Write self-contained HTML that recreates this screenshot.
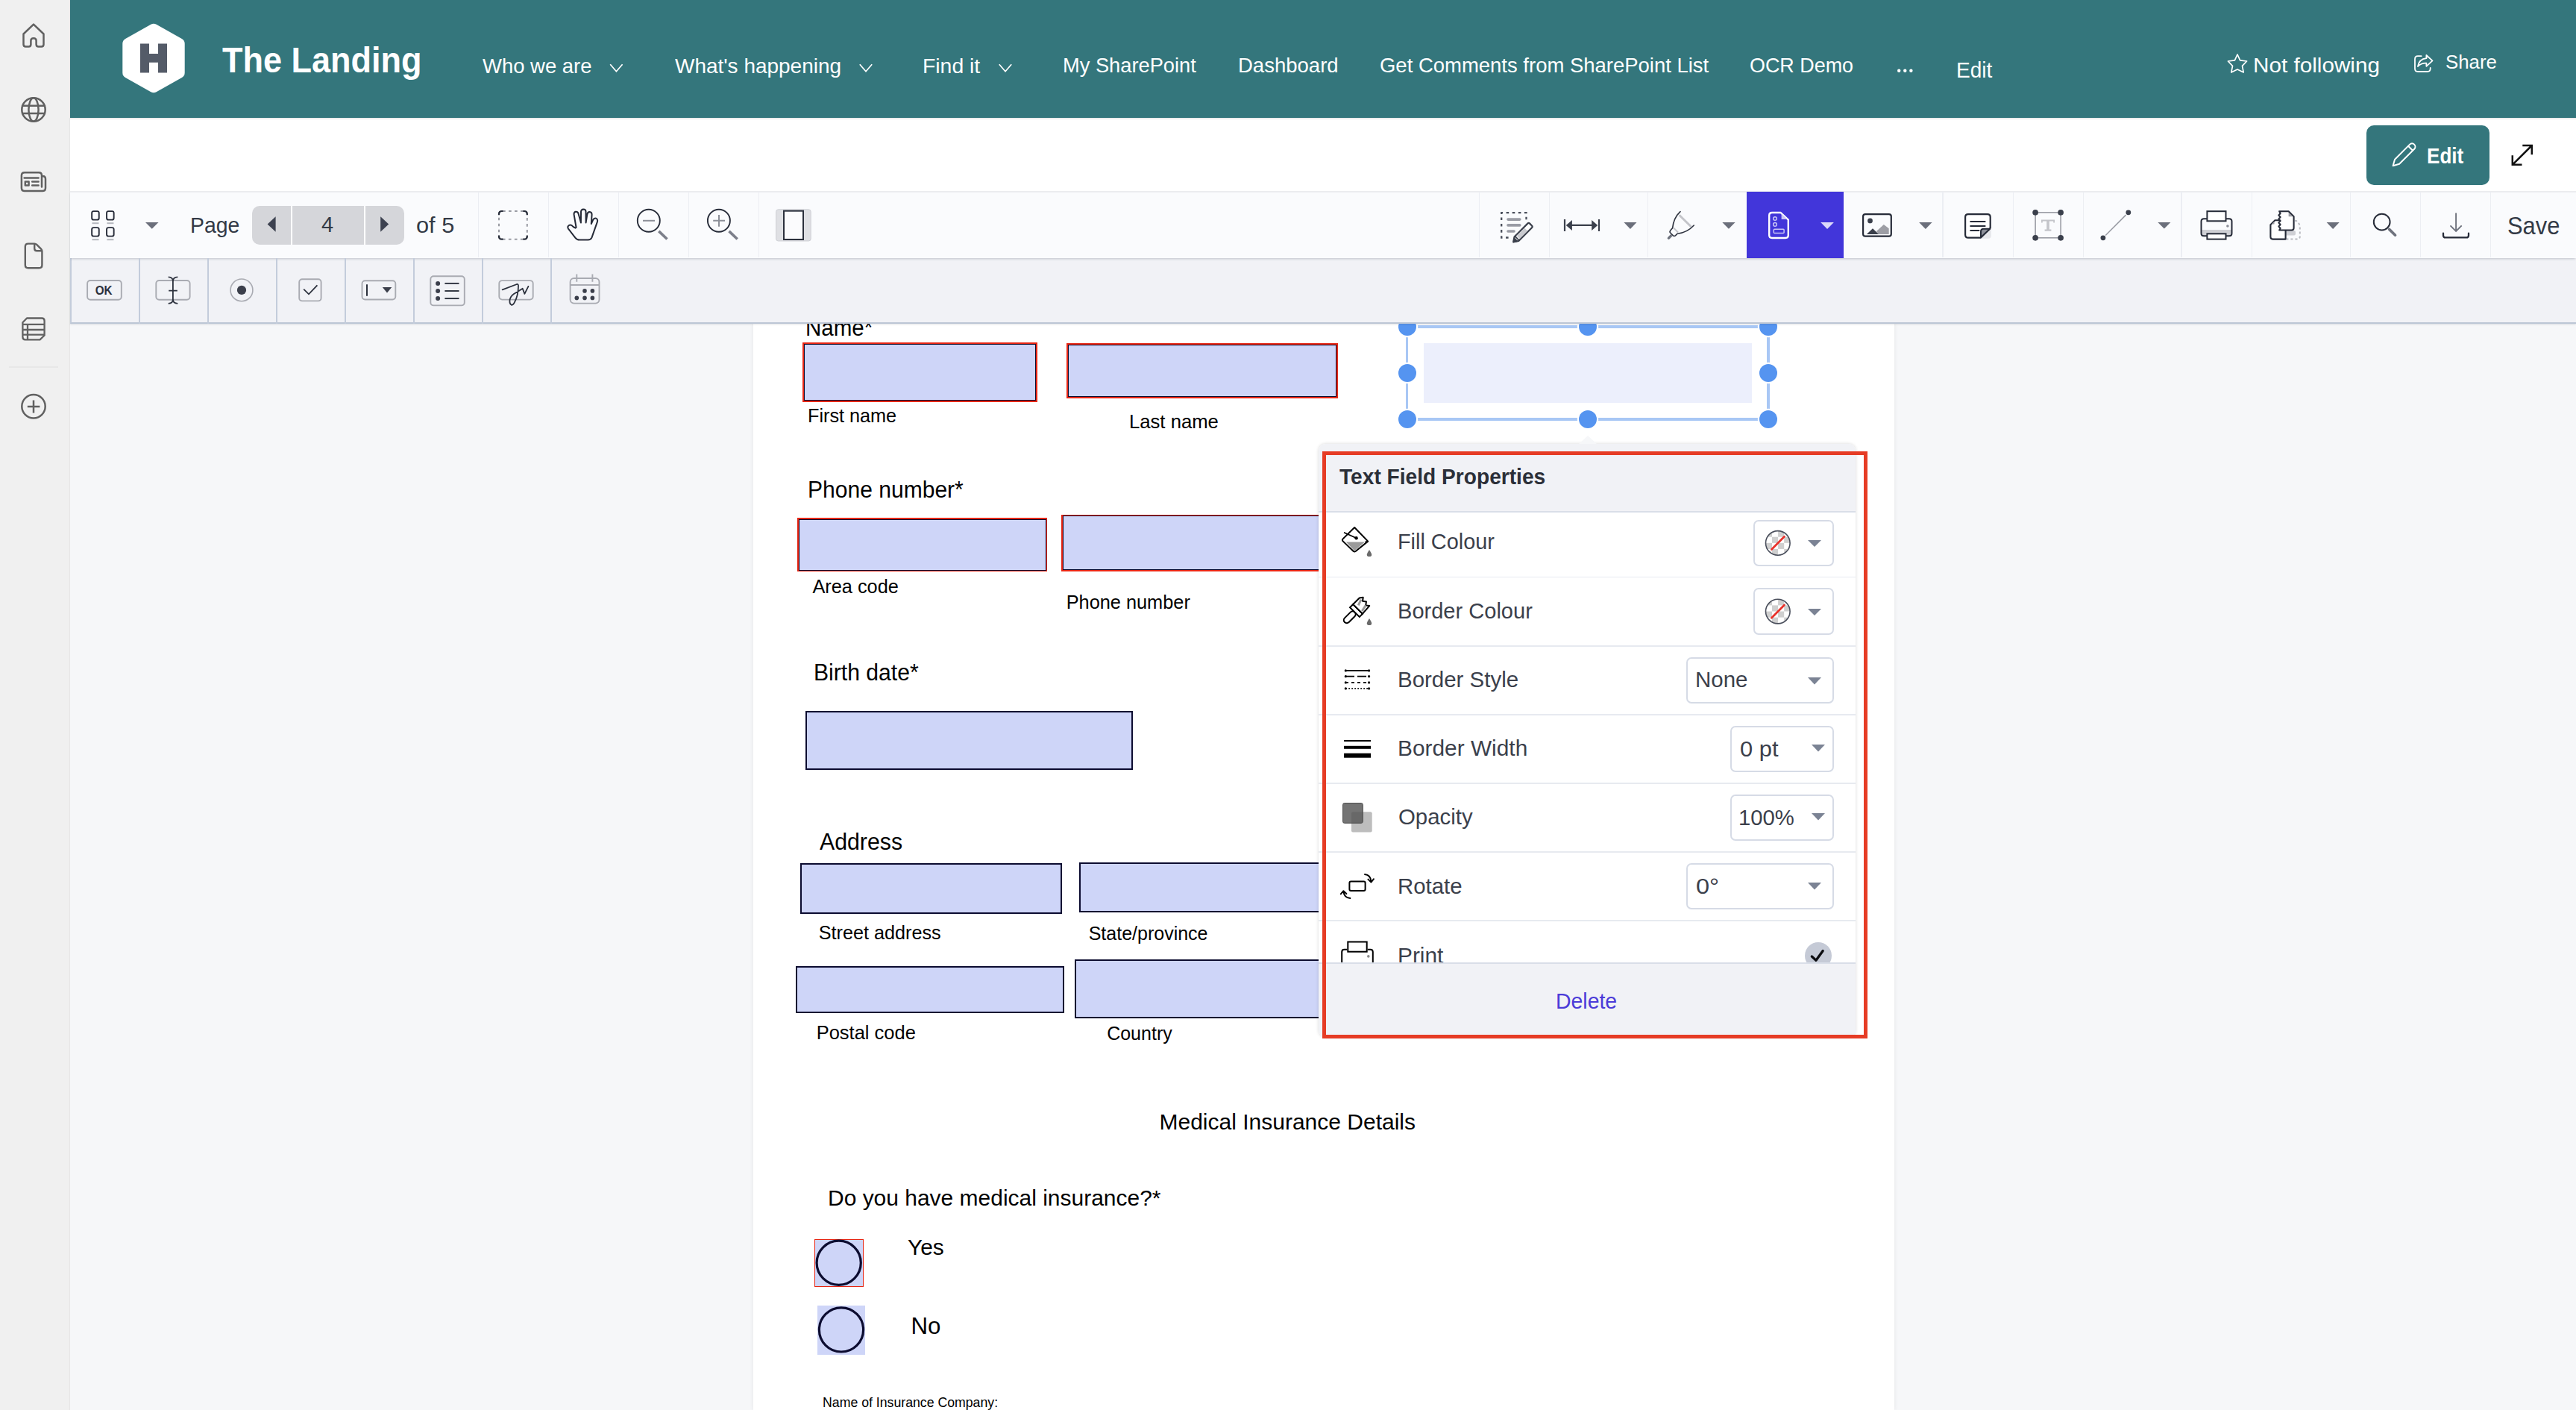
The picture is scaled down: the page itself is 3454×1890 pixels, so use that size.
<!DOCTYPE html>
<html><head><meta charset="utf-8"><style>
html,body{margin:0;padding:0}
body{width:3454px;height:1890px;overflow:hidden;position:relative;background:#f6f7f9;font-family:"Liberation Sans",sans-serif}
.t{position:absolute;white-space:nowrap;transform-origin:0 0}
svg{position:absolute;overflow:visible}
</style></head><body>
<div style="position:absolute;left:0px;top:0px;width:94px;height:1890px;background:#f0f0f0;border-right:1px solid #e6e6e6;box-sizing:border-box"></div>
<div style="position:absolute;left:94px;top:0px;width:3360px;height:158px;background:#34767c"></div>
<div style="position:absolute;left:94px;top:158px;width:3360px;height:99px;background:#ffffff;border-top:2px solid #ededed;box-sizing:border-box"></div>
<div style="position:absolute;left:94px;top:432px;width:3360px;height:1458px;background:#f6f7f9"></div>
<div style="position:absolute;left:1010px;top:432px;width:1530px;height:1458px;background:#ffffff;box-shadow:0 0 6px rgba(0,0,0,0.08);z-index:1"></div>
<div style="position:absolute;left:94px;top:256px;width:3360px;height:90px;background:#fafbfd;border-top:2px solid #ebecef;box-sizing:border-box;box-shadow:0 2px 3px -1px rgba(60,70,90,0.28);z-index:5"></div>
<div style="position:absolute;left:94px;top:346px;width:3360px;height:88px;background:#f1f2f6;border-left:2px solid #c3ccdb;border-bottom:2px solid #bcc6d5;box-sizing:border-box;z-index:4;box-shadow:0 1px 2px rgba(60,70,90,0.15)"></div>
<div style="position:absolute;left:186px;top:346px;width:2px;height:88px;background:#c3ccdb;z-index:6"></div>
<div style="position:absolute;left:278px;top:346px;width:2px;height:88px;background:#c3ccdb;z-index:6"></div>
<div style="position:absolute;left:370px;top:346px;width:2px;height:88px;background:#c3ccdb;z-index:6"></div>
<div style="position:absolute;left:462px;top:346px;width:2px;height:88px;background:#c3ccdb;z-index:6"></div>
<div style="position:absolute;left:554px;top:346px;width:2px;height:88px;background:#c3ccdb;z-index:6"></div>
<div style="position:absolute;left:646px;top:346px;width:2px;height:88px;background:#c3ccdb;z-index:6"></div>
<div style="position:absolute;left:738px;top:346px;width:2px;height:88px;background:#c3ccdb;z-index:6"></div>
<div style="position:absolute;left:640.5px;top:257px;width:1.5px;height:88px;background:#eceef3;z-index:6"></div>
<div style="position:absolute;left:734.5px;top:257px;width:1.5px;height:88px;background:#eceef3;z-index:6"></div>
<div style="position:absolute;left:828.5px;top:257px;width:1.5px;height:88px;background:#eceef3;z-index:6"></div>
<div style="position:absolute;left:922.5px;top:257px;width:1.5px;height:88px;background:#eceef3;z-index:6"></div>
<div style="position:absolute;left:1016.5px;top:257px;width:1.5px;height:88px;background:#eceef3;z-index:6"></div>
<div style="position:absolute;left:1982.5px;top:257px;width:1.5px;height:88px;background:#eceef3;z-index:6"></div>
<div style="position:absolute;left:2076.5px;top:257px;width:1.5px;height:88px;background:#eceef3;z-index:6"></div>
<div style="position:absolute;left:2208.5px;top:257px;width:1.5px;height:88px;background:#eceef3;z-index:6"></div>
<div style="position:absolute;left:2604.0px;top:257px;width:1.5px;height:88px;background:#eceef3;z-index:6"></div>
<div style="position:absolute;left:2698.5px;top:257px;width:1.5px;height:88px;background:#eceef3;z-index:6"></div>
<div style="position:absolute;left:2792.5px;top:257px;width:1.5px;height:88px;background:#eceef3;z-index:6"></div>
<div style="position:absolute;left:2924.1px;top:257px;width:1.5px;height:88px;background:#eceef3;z-index:6"></div>
<div style="position:absolute;left:3018.5px;top:257px;width:1.5px;height:88px;background:#eceef3;z-index:6"></div>
<div style="position:absolute;left:3150.5px;top:257px;width:1.5px;height:88px;background:#eceef3;z-index:6"></div>
<div style="position:absolute;left:3244.5px;top:257px;width:1.5px;height:88px;background:#eceef3;z-index:6"></div>
<div style="position:absolute;left:3338.5px;top:257px;width:1.5px;height:88px;background:#eceef3;z-index:6"></div>
<div style="position:absolute;left:2342px;top:257px;width:130px;height:88.5px;background:#4236da;z-index:7"></div>
<div style="position:absolute;left:338px;top:276px;width:204px;height:52px;background:#d5d6da;border-radius:10px;z-index:7"></div>
<div style="position:absolute;left:390px;top:276px;width:2px;height:52px;background:#ffffff;z-index:8"></div>
<div style="position:absolute;left:488px;top:276px;width:2px;height:52px;background:#ffffff;z-index:8"></div>
<div style="position:absolute;left:3173px;top:168px;width:165px;height:80px;background:#34767c;border-radius:10px"></div>
<div style="position:absolute;left:1076px;top:459px;width:314.7px;height:79.8px;background:#e62614;z-index:2"></div>
<div style="position:absolute;left:1077.5px;top:460.5px;width:311.7px;height:76.8px;background:#ced5f8;border:1.8px solid #0c0c30;box-sizing:border-box;z-index:2"></div>
<div style="position:absolute;left:1430px;top:460.4px;width:363.5px;height:73.6px;background:#e62614;z-index:2"></div>
<div style="position:absolute;left:1431.5px;top:461.9px;width:360.5px;height:70.6px;background:#ced5f8;border:1.8px solid #0c0c30;box-sizing:border-box;z-index:2"></div>
<div style="position:absolute;left:1069px;top:694px;width:335px;height:72px;background:#e62614;z-index:2"></div>
<div style="position:absolute;left:1070.5px;top:695.5px;width:332.0px;height:69.0px;background:#ced5f8;border:1.8px solid #0c0c30;box-sizing:border-box;z-index:2"></div>
<div style="position:absolute;left:1423px;top:689.6px;width:367px;height:76.4px;background:#e62614;z-index:2"></div>
<div style="position:absolute;left:1424.5px;top:691.1px;width:364.0px;height:73.4px;background:#ced5f8;border:1.8px solid #0c0c30;box-sizing:border-box;z-index:2"></div>
<div style="position:absolute;left:1080.2px;top:953px;width:439.3px;height:79px;background:#ced5f8;border:2.4px solid #0c0c30;box-sizing:border-box;z-index:2"></div>
<div style="position:absolute;left:1073.2px;top:1156.7px;width:351.3px;height:67.9px;background:#ced5f8;border:2.4px solid #0c0c30;box-sizing:border-box;z-index:2"></div>
<div style="position:absolute;left:1447px;top:1155.5px;width:343px;height:67.9px;background:#ced5f8;border:2.4px solid #0c0c30;box-sizing:border-box;z-index:2"></div>
<div style="position:absolute;left:1067px;top:1294.5px;width:359.6px;height:63.8px;background:#ced5f8;border:2.4px solid #0c0c30;box-sizing:border-box;z-index:2"></div>
<div style="position:absolute;left:1441.4px;top:1285.5px;width:348.6px;height:79.0px;background:#ced5f8;border:2.4px solid #0c0c30;box-sizing:border-box;z-index:2"></div>
<div style="position:absolute;left:1092px;top:1660.8px;width:66.3px;height:64.2px;background:#ced5f8;border:1.5px solid #e62614;box-sizing:border-box;z-index:2"></div>
<div style="position:absolute;left:1096.3px;top:1749.8px;width:63.6px;height:65.9px;background:#ced5f8;z-index:2"></div>
<svg style="left:1092px;top:1660px;z-index:3;" width="70" height="70" viewBox="0 0 70 70"><circle cx="32.7" cy="32.7" r="29.6" fill="none" stroke="#0c0c30" stroke-width="3.2"/></svg>
<svg style="left:1096px;top:1750px;z-index:3;" width="70" height="70" viewBox="0 0 70 70"><circle cx="32" cy="32.4" r="29.6" fill="none" stroke="#0c0c30" stroke-width="3.2"/></svg>
<div style="position:absolute;left:1909px;top:459.8px;width:439.7px;height:79.9px;background:#eceffc;z-index:2"></div>
<div style="position:absolute;left:1884.8px;top:436.3px;width:487.8px;height:3.4px;background:#a8c7f5;z-index:2"></div>
<div style="position:absolute;left:1884.8px;top:560.1999999999999px;width:487.8px;height:3.4px;background:#a8c7f5;z-index:2"></div>
<div style="position:absolute;left:1884.8px;top:438px;width:3.4px;height:123.9px;background:#a8c7f5;z-index:2"></div>
<div style="position:absolute;left:2369.2000000000003px;top:438px;width:3.4px;height:123.9px;background:#a8c7f5;z-index:2"></div>
<div style="position:absolute;left:1874.5px;top:426px;width:24.0px;height:24px;background:#5594f0;border-radius:50%;box-shadow:0 0 0 2.2px #fff;z-index:3"></div>
<div style="position:absolute;left:2116.7px;top:426px;width:24.0px;height:24px;background:#5594f0;border-radius:50%;box-shadow:0 0 0 2.2px #fff;z-index:3"></div>
<div style="position:absolute;left:2358.9px;top:426px;width:24.0px;height:24px;background:#5594f0;border-radius:50%;box-shadow:0 0 0 2.2px #fff;z-index:3"></div>
<div style="position:absolute;left:1874.5px;top:487.95px;width:24.0px;height:24.0px;background:#5594f0;border-radius:50%;box-shadow:0 0 0 2.2px #fff;z-index:3"></div>
<div style="position:absolute;left:2358.9px;top:487.95px;width:24.0px;height:24.0px;background:#5594f0;border-radius:50%;box-shadow:0 0 0 2.2px #fff;z-index:3"></div>
<div style="position:absolute;left:1874.5px;top:549.9px;width:24.0px;height:24.0px;background:#5594f0;border-radius:50%;box-shadow:0 0 0 2.2px #fff;z-index:3"></div>
<div style="position:absolute;left:2116.7px;top:549.9px;width:24.0px;height:24.0px;background:#5594f0;border-radius:50%;box-shadow:0 0 0 2.2px #fff;z-index:3"></div>
<div style="position:absolute;left:2358.9px;top:549.9px;width:24.0px;height:24.0px;background:#5594f0;border-radius:50%;box-shadow:0 0 0 2.2px #fff;z-index:3"></div>
<div style="position:absolute;left:1768px;top:595px;width:720px;height:795px;background:#ffffff;border-radius:9px;box-shadow:0 0 4px rgba(0,0,0,0.16);z-index:10"></div>
<svg style="left:2116px;top:583px;z-index:10;" width="26" height="14" viewBox="0 0 26 14"><path d="M0 13 L13 1 L26 13 Z" fill="#f6f7f9"/></svg>
<div style="position:absolute;left:1768px;top:595px;width:720px;height:92px;background:#f1f2f6;border-radius:9px 9px 0 0;border-bottom:2px solid #d9dee8;box-sizing:border-box;z-index:11"></div>
<div style="position:absolute;left:1768px;top:772.9px;width:720px;height:1.5px;background:#e7eaf0;z-index:11"></div>
<div style="position:absolute;left:1768px;top:865.0px;width:720px;height:1.5px;background:#e7eaf0;z-index:11"></div>
<div style="position:absolute;left:1768px;top:957.2px;width:720px;height:1.5px;background:#e7eaf0;z-index:11"></div>
<div style="position:absolute;left:1768px;top:1049.1px;width:720px;height:1.5px;background:#e7eaf0;z-index:11"></div>
<div style="position:absolute;left:1768px;top:1141.1px;width:720px;height:1.5px;background:#e7eaf0;z-index:11"></div>
<div style="position:absolute;left:1768px;top:1233.0px;width:720px;height:1.5px;background:#e7eaf0;z-index:11"></div>
<div style="position:absolute;left:2350.6px;top:696.5px;width:108.5px;height:62.9px;border:2px solid #d6dbe6;border-radius:7px;box-sizing:border-box;background:#fff;z-index:11"></div>
<div style="position:absolute;left:2350.6px;top:788.4px;width:108.5px;height:62.8px;border:2px solid #d6dbe6;border-radius:7px;box-sizing:border-box;background:#fff;z-index:11"></div>
<div style="position:absolute;left:2260.7px;top:881px;width:198.3px;height:62px;border:2px solid #d6dbe6;border-radius:7px;box-sizing:border-box;background:#fff;z-index:11"></div>
<div style="position:absolute;left:2320.4px;top:973px;width:138.6px;height:62px;border:2px solid #d6dbe6;border-radius:7px;box-sizing:border-box;background:#fff;z-index:11"></div>
<div style="position:absolute;left:2320.4px;top:1065px;width:138.6px;height:62px;border:2px solid #d6dbe6;border-radius:7px;box-sizing:border-box;background:#fff;z-index:11"></div>
<div style="position:absolute;left:2260.7px;top:1157px;width:198.3px;height:62px;border:2px solid #d6dbe6;border-radius:7px;box-sizing:border-box;background:#fff;z-index:11"></div>
<svg style="left:2424px;top:723.7px;z-index:12;" width="18" height="9" viewBox="0 0 18 9"><path d="M0 0 L18 0 L9.0 9 Z" fill="#7b8394"/></svg>
<svg style="left:2424px;top:815.5px;z-index:12;" width="18" height="9" viewBox="0 0 18 9"><path d="M0 0 L18 0 L9.0 9 Z" fill="#7b8394"/></svg>
<svg style="left:2423.8px;top:908px;z-index:12;" width="18" height="9.5" viewBox="0 0 18 9.5"><path d="M0 0 L18 0 L9.0 9.5 Z" fill="#7b8394"/></svg>
<svg style="left:2428.5px;top:998px;z-index:12;" width="18" height="9.5" viewBox="0 0 18 9.5"><path d="M0 0 L18 0 L9.0 9.5 Z" fill="#7b8394"/></svg>
<svg style="left:2428.5px;top:1090px;z-index:12;" width="18" height="9.5" viewBox="0 0 18 9.5"><path d="M0 0 L18 0 L9.0 9.5 Z" fill="#7b8394"/></svg>
<svg style="left:2423.8px;top:1183px;z-index:12;" width="18" height="9.5" viewBox="0 0 18 9.5"><path d="M0 0 L18 0 L9.0 9.5 Z" fill="#7b8394"/></svg>
<div style="position:absolute;left:2420px;top:1263.4px;width:36px;height:36.0px;background:#c5cad6;border-radius:50%;z-index:11"></div>
<div style="position:absolute;left:1768px;top:1289.8px;width:720px;height:100.2px;background:#f1f2f6;border-top:2px solid #d9dee8;box-sizing:border-box;border-radius:0 0 9px 9px;z-index:14"></div>
<div style="position:absolute;left:1773px;top:605px;width:731px;height:787px;border:5.3px solid #e63c25;box-sizing:border-box;z-index:20"></div>
<div class="t" style="left:298.15px;top:57.29px;font-size:47.86px;line-height:47.86px;font-weight:700;color:#ffffff;transform:scaleX(0.9407);z-index:20">The Landing</div>
<div class="t" style="left:646.8px;top:73.53px;font-size:28.55px;line-height:28.55px;font-weight:400;color:#ffffff;transform:scaleX(0.9617);z-index:20">Who we are</div>
<div class="t" style="left:904.5px;top:73.53px;font-size:28.55px;line-height:28.55px;font-weight:400;color:#ffffff;transform:scaleX(0.9798);z-index:20">What's happening</div>
<div class="t" style="left:1236.73px;top:73.53px;font-size:28.55px;line-height:28.55px;font-weight:400;color:#ffffff;transform:scaleX(0.993);z-index:20">Find it</div>
<div class="t" style="left:1425.22px;top:73.9px;font-size:28.12px;line-height:28.12px;font-weight:400;color:#ffffff;transform:scaleX(0.9697);z-index:20">My SharePoint</div>
<div class="t" style="left:1660.1px;top:73.9px;font-size:28.12px;line-height:28.12px;font-weight:400;color:#ffffff;transform:scaleX(0.9789);z-index:20">Dashboard</div>
<div class="t" style="left:1849.63px;top:73.9px;font-size:28.12px;line-height:28.12px;font-weight:400;color:#ffffff;transform:scaleX(0.9773);z-index:20">Get Comments from SharePoint List</div>
<div class="t" style="left:2345.92px;top:73.9px;font-size:28.12px;line-height:28.12px;font-weight:400;color:#ffffff;transform:scaleX(0.9571);z-index:20">OCR Demo</div>
<div class="t" style="left:2622.76px;top:79.94px;font-size:29.13px;line-height:29.13px;font-weight:400;color:#ffffff;transform:scaleX(0.9598);z-index:20">Edit</div>
<div class="t" style="left:3020.62px;top:74.41px;font-size:27.39px;line-height:27.39px;font-weight:400;color:#ffffff;transform:scaleX(1.0843);z-index:20">Not following</div>
<div class="t" style="left:3278.97px;top:70.25px;font-size:26.52px;line-height:26.52px;font-weight:400;color:#ffffff;transform:scaleX(0.9745);z-index:20">Share</div>
<div class="t" style="left:3254.44px;top:194.81px;font-size:28.57px;line-height:28.57px;font-weight:700;color:#ffffff;transform:scaleX(0.9125);z-index:20">Edit</div>
<div class="t" style="left:254.73px;top:287.86px;font-size:28.99px;line-height:28.99px;font-weight:400;color:#333a46;transform:scaleX(0.9794);z-index:20">Page</div>
<div class="t" style="left:431.12px;top:287.46px;font-size:28.99px;line-height:28.99px;font-weight:400;color:#333a46;transform:scaleX(1.0012);z-index:20">4</div>
<div class="t" style="left:558.37px;top:287.86px;font-size:28.99px;line-height:28.99px;font-weight:400;color:#333a46;transform:scaleX(1.0598);z-index:20">of 5</div>
<div class="t" style="left:3361.77px;top:285.83px;font-size:33.04px;line-height:33.04px;font-weight:400;color:#333a46;transform:scaleX(0.9341);z-index:20">Save</div>
<div class="t" style="left:1796.22px;top:624.39px;font-size:29.43px;line-height:29.43px;font-weight:700;color:#2b2f38;transform:scaleX(0.9563);z-index:20">Text Field Properties</div>
<div class="t" style="left:1874.49px;top:712.19px;font-size:28.6px;line-height:28.6px;font-weight:400;color:#3b404b;transform:scaleX(1.009);z-index:20">Fill Colour</div>
<div class="t" style="left:1874.48px;top:805.09px;font-size:28.6px;line-height:28.6px;font-weight:400;color:#3b404b;transform:scaleX(1.0161);z-index:20">Border Colour</div>
<div class="t" style="left:1873.64px;top:897.09px;font-size:28.6px;line-height:28.6px;font-weight:400;color:#3b404b;transform:scaleX(1.0302);z-index:20">Border Style</div>
<div class="t" style="left:1873.61px;top:988.99px;font-size:28.6px;line-height:28.6px;font-weight:400;color:#3b404b;transform:scaleX(1.0442);z-index:20">Border Width</div>
<div class="t" style="left:1874.82px;top:1080.99px;font-size:28.6px;line-height:28.6px;font-weight:400;color:#3b404b;transform:scaleX(1.028);z-index:20">Opacity</div>
<div class="t" style="left:1873.65px;top:1173.69px;font-size:28.6px;line-height:28.6px;font-weight:400;color:#3b404b;transform:scaleX(1.0279);z-index:20">Rotate</div>
<div class="t" style="left:1873.61px;top:1266.79px;font-size:28.6px;line-height:28.6px;font-weight:400;color:#3b404b;transform:scaleX(1.0428);z-index:13">Print</div>
<div class="t" style="left:2272.64px;top:897.09px;font-size:28.6px;line-height:28.6px;font-weight:400;color:#3b404b;transform:scaleX(1.03);z-index:20">None</div>
<div class="t" style="left:2332.87px;top:989.79px;font-size:28.6px;line-height:28.6px;font-weight:400;color:#3b404b;transform:scaleX(1.0787);z-index:20">0 pt</div>
<div class="t" style="left:2331.45px;top:1081.79px;font-size:28.6px;line-height:28.6px;font-weight:400;color:#3b404b;transform:scaleX(1.024);z-index:20">100%</div>
<div class="t" style="left:2274.02px;top:1173.69px;font-size:28.6px;line-height:28.6px;font-weight:400;color:#3b404b;transform:scaleX(1.1384);z-index:20">0°</div>
<div class="t" style="left:2086.02px;top:1327.79px;font-size:28.6px;line-height:28.6px;font-weight:400;color:#4b3bd8;transform:scaleX(0.9943);z-index:20">Delete</div>
<div class="t" style="left:1079.94px;top:423.65px;font-size:31.01px;line-height:31.01px;font-weight:400;color:#000000;transform:scaleX(0.9529);z-index:2">Name*</div>
<div class="t" style="left:1082.98px;top:544.93px;font-size:25.24px;line-height:25.24px;font-weight:400;color:#000000;transform:scaleX(1.0);z-index:2">First name</div>
<div class="t" style="left:1513.94px;top:552.55px;font-size:25.7px;line-height:25.7px;font-weight:400;color:#000000;transform:scaleX(1.0);z-index:2">Last name</div>
<div class="t" style="left:1082.6px;top:640.65px;font-size:31.01px;line-height:31.01px;font-weight:400;color:#000000;transform:scaleX(0.9692);z-index:2">Phone number*</div>
<div class="t" style="left:1089.4px;top:774.35px;font-size:25.34px;line-height:25.34px;font-weight:400;color:#000000;transform:scaleX(1.0);z-index:2">Area code</div>
<div class="t" style="left:1429.67px;top:795.15px;font-size:25.34px;line-height:25.34px;font-weight:400;color:#000000;transform:scaleX(1.0);z-index:2">Phone number</div>
<div class="t" style="left:1090.54px;top:885.98px;font-size:31.45px;line-height:31.45px;font-weight:400;color:#000000;transform:scaleX(0.9584);z-index:2">Birth date*</div>
<div class="t" style="left:1099.1px;top:1112.96px;font-size:31.59px;line-height:31.59px;font-weight:400;color:#000000;transform:scaleX(0.9586);z-index:2">Address</div>
<div class="t" style="left:1097.79px;top:1238.07px;font-size:25.2px;line-height:25.2px;font-weight:400;color:#000000;transform:scaleX(1.0);z-index:2">Street address</div>
<div class="t" style="left:1459.7px;top:1238.83px;font-size:25.01px;line-height:25.01px;font-weight:400;color:#000000;transform:scaleX(1.0);z-index:2">State/province</div>
<div class="t" style="left:1094.66px;top:1372.41px;font-size:25.5px;line-height:25.5px;font-weight:400;color:#000000;transform:scaleX(1.0);z-index:2">Postal code</div>
<div class="t" style="left:1484.15px;top:1372.81px;font-size:25.03px;line-height:25.03px;font-weight:400;color:#000000;transform:scaleX(1.0);z-index:2">Country</div>
<div class="t" style="left:1554.5px;top:1488.6px;font-size:30.01px;line-height:30.01px;font-weight:400;color:#000000;transform:scaleX(1.0);z-index:2">Medical Insurance Details</div>
<div class="t" style="left:1110.0px;top:1590.63px;font-size:29.97px;line-height:29.97px;font-weight:400;color:#000000;transform:scaleX(1.0);z-index:2">Do you have medical insurance?*</div>
<div class="t" style="left:1217.0px;top:1657.28px;font-size:29.91px;line-height:29.91px;font-weight:400;color:#000000;transform:scaleX(1.0);z-index:2">Yes</div>
<div class="t" style="left:1221.5px;top:1761.56px;font-size:31.23px;line-height:31.23px;font-weight:400;color:#000000;transform:scaleX(1.0);z-index:2">No</div>
<div class="t" style="left:1103.08px;top:1872.42px;font-size:17.7px;line-height:17.7px;font-weight:400;color:#000000;transform:scaleX(1.0);z-index:2">Name of Insurance Company:</div>
<svg style="left:0;top:0;z-index:30;pointer-events:none" width="3454" height="1890" viewBox="0 0 3454 1890"><g fill="none" stroke="#616161" stroke-width="2.5" stroke-linejoin="round" stroke-linecap="round"><path d="M31.5 45.5 L45 32.6 L58.5 45.5 V59.4 Q58.5 62.4 55.5 62.4 H51.6 Q48.6 62.4 48.6 59.4 V54.6 Q48.6 51.3 45 51.3 Q41.4 51.3 41.4 54.6 V59.4 Q41.4 62.4 38.4 62.4 H34.5 Q31.5 62.4 31.5 59.4 Z"/><circle cx="45" cy="147" r="15.7"/><ellipse cx="45" cy="147" rx="6.6" ry="15.7"/><path d="M30 141.8 H60 M30 151.9 H60"/><path d="M56 250.5 V235.3 Q56 231.3 52 231.3 H33 Q28.9 231.3 28.9 235.3 V252 Q28.9 256 32.9 256 H57 Q61 256 61 252 V240 Q61 236 57 236 H56"/><path d="M32.6 238.4 H51.6 M43.2 243.6 H51.6 M43.2 248.5 H51.6"/><rect x="33.8" y="243.4" width="4.8" height="5.2"/><path d="M46.2 326.6 H37.8 Q33.8 326.6 33.8 330.6 V355.2 Q33.8 359.2 37.8 359.2 H52.4 Q56.4 359.2 56.4 355.2 V336.8 Q56.4 335 55 333.6 L49.2 327.8 Q48 326.6 46.2 326.6 Z M46.2 326.8 V333 Q46.2 336.3 49.5 336.3 H56.2" stroke-width="2.4"/><path d="M36 426.5 H56 Q59.6 426.5 59.6 430 V449.5 L53.5 455.3 H34 Q30.4 455.3 30.4 451.7 V432.3 Z M30.4 434.9 H59.6 M30.4 442 H59.6 M30.4 448.7 H59.6 M37 434.9 V455.3" stroke-width="2.3"/><circle cx="45" cy="544.8" r="15.7"/><path d="M36.8 545 H53.4 M45 536.6 V553.4" stroke-linecap="butt"/></g><rect x="12" y="491.5" width="66" height="1" fill="#dedede"/><polygon points="206,39.3 240.2,58.6 240.2,97.4 206,116.7 171.8,97.4 171.8,58.6" fill="#fff" stroke="#fff" stroke-width="15" stroke-linejoin="round"/><path d="M188 58.5 H200 V72 H212 V58.5 H224 V97.4 H212 V83.8 H200 V97.4 H188 Z" fill="#545b68"/><path d="M818.1999999999999 86.3 L826.4 95.8 L834.6 86.3" fill="none" stroke="#fff" stroke-width="1.7" stroke-linejoin="miter"/><path d="M1152.8 86.3 L1161 95.8 L1169.2 86.3" fill="none" stroke="#fff" stroke-width="1.7" stroke-linejoin="miter"/><path d="M1339.8 86.3 L1348 95.8 L1356.2 86.3" fill="none" stroke="#fff" stroke-width="1.7" stroke-linejoin="miter"/><circle cx="2546.2" cy="94.7" r="2.2" fill="#fff"/><circle cx="2554.3" cy="94.7" r="2.2" fill="#fff"/><circle cx="2562.4" cy="94.7" r="2.2" fill="#fff"/><path d="M3000 73 L3003.6 80.8 L3012.6 82 L3006.5 88.4 L3008.2 97 L3000 93 L2991.8 97 L2993.5 88.4 L2987.4 82 L2996.4 80.8 Z" fill="none" stroke="#fff" stroke-width="1.7" stroke-linejoin="round"/><path d="M3246.6 75.2 H3242 Q3238 75.2 3238 79.2 V92 Q3238 96 3242 96 H3254.7 Q3258.7 96 3258.7 92 V90.9" fill="none" stroke="#fff" stroke-width="1.8" stroke-linecap="round"/><path d="M3253.4 74 L3261.5 81.3 L3253.4 88.8 V84.6 Q3246.5 84.2 3242 89 Q3243.5 79.2 3253.4 78.2 Z" fill="none" stroke="#fff" stroke-width="1.8" stroke-linejoin="round"/><g transform="translate(3208.6,222.2) rotate(-45)" fill="none" stroke="#fff" stroke-width="2" stroke-linejoin="round"><path d="M0 0 L7.7 -4.3 H36.1 A4.3 4.3 0 0 1 36.1 4.3 H7.7 Z M33.2 -4.3 V4.3"/></g><path d="M3382.3 195 H3394.8 V207.3 M3394.8 195 L3368.8 220.8 M3368.8 208.3 V220.8 H3381.5" fill="none" stroke="#111" stroke-width="2.5"/><rect x="123.15" y="283.15" width="9.6" height="11.5" rx="2.4" fill="none" stroke="#262b38" stroke-width="1.9"/><rect x="123.5" y="298.2" width="9" height="2" fill="#b6b8bf"/><rect x="143.04999999999998" y="283.15" width="9.6" height="11.5" rx="2.4" fill="none" stroke="#262b38" stroke-width="1.9"/><rect x="143.4" y="298.2" width="9" height="2" fill="#b6b8bf"/><rect x="123.15" y="305.15" width="9.6" height="11.5" rx="2.4" fill="none" stroke="#262b38" stroke-width="1.9"/><rect x="123.5" y="320.2" width="9" height="2" fill="#b6b8bf"/><rect x="143.04999999999998" y="305.15" width="9.6" height="11.5" rx="2.4" fill="none" stroke="#262b38" stroke-width="1.9"/><rect x="143.4" y="320.2" width="9" height="2" fill="#b6b8bf"/><path d="M195 298 L212.5 298 L203.75 306.8 Z" fill="#6b6f7b"/><path d="M358.6 300.5 L369.6 290.3 V310.7 Z" fill="#3d4250"/><path d="M521.2 300.5 L510.2 290.3 V310.7 Z" fill="#3d4250"/><rect x="669" y="283" width="37.8" height="37.7" rx="4" fill="none" stroke="#9a9ca4" stroke-width="2" stroke-dasharray="3.7 4.3" stroke-dashoffset="-1"/><path d="M669 288.2 V287 Q669 283 673 283 H674.5 M701.3 283 H702.8 Q706.8 283 706.8 287 V288.2 M706.8 315.5 V316.7 Q706.8 320.7 702.8 320.7 H701.3 M674.5 320.7 H673 Q669 320.7 669 316.7 V315.5" fill="none" stroke="#262b38" stroke-width="2.2"/><path d="M771.6 305.6 L768.6 304 Q766 300.6 763.2 301.8 Q760.2 303.4 762 306.6 L771.5 318.8 Q773.6 321.5 777 321.5 H788.5 Q792 321.5 793.5 318.3 L800.9 297.4 Q801.8 293.6 799.2 292.6 Q796.6 291.8 795 295 L792.8 300 M792.8 299.8 L793.6 287.6 Q793.6 284.2 790.6 284 Q787.8 284 787.3 287.5 L785.6 298.4 M785.6 298.4 L785.5 283.6 Q785.4 280.6 782.2 280.6 Q779.2 280.8 779 283.8 L778.9 298.6 M778.9 298.6 L775.5 286.3 Q774.6 283.4 771.8 283.8 Q769.2 284.6 769.6 287.6 L772.6 305" fill="none" stroke="#262b38" stroke-width="2" stroke-linejoin="round" stroke-linecap="round"/><circle cx="869.8" cy="295.8" r="15" fill="none" stroke="#262b38" stroke-width="1.9"/><path d="M862 295.8 H878" stroke="#8d9099" stroke-width="2"/><path d="M883.3 309.9 L894.5 320.5" stroke="#7c7f8a" stroke-width="3.6"/><circle cx="963.9" cy="295.8" r="15" fill="none" stroke="#262b38" stroke-width="1.9"/><path d="M956.2 295.8 H972 M964 288 V303.8" stroke="#8d9099" stroke-width="2"/><path d="M977.5 309.9 L988.7 320.5" stroke="#7c7f8a" stroke-width="3.6"/><rect x="1040.6" y="280.8" width="46.6" height="42.2" rx="3" fill="#dfe0e4" stroke="#cdcfd5" stroke-width="1"/><rect x="1051" y="282.7" width="26" height="38.3" fill="#fbfbfd" stroke="#2b303c" stroke-width="2"/><path d="M2013.2 295 V285.2 H2046.5 V296 M2013.2 300 V318.5 H2024" fill="none" stroke="#4a4f5b" stroke-width="2.3" stroke-dasharray="3.6 4.5"/><path d="M2022 294.1 H2037.8 M2022 301.9 H2037.8 M2022 310 H2030" stroke="#9a9ca5" stroke-width="3.6" stroke-linecap="round"/><g transform="translate(2029.2,324.4) rotate(-45)"><path d="M0 0 L6 -4 H31 Q33 -4 33 -2 V2 Q33 4 31 4 H6 Z" fill="#fff" stroke="#3a3f4b" stroke-width="2.2" stroke-linejoin="round"/><rect x="9" y="-2.9" width="15" height="5.8" fill="#c9cacf"/><path d="M0 0 L4.5 -3 V3 Z" fill="#3a3f4b" stroke="#3a3f4b" stroke-width="1.6" stroke-linejoin="round"/><path d="M7 -4 V4" stroke="#3a3f4b" stroke-width="1.8"/></g><path d="M2098 294.1 V310 M2144 294.1 V310 M2104 301.9 H2138" stroke="#3b404c" stroke-width="2.2"/><path d="M2099.8 301.9 L2107.9 294.9 V308.9 Z M2142.2 301.9 L2134.2 294.9 V308.9 Z" fill="#3b404c"/><path d="M2177.4 298 L2194.5 298 L2185.95 307 Z" fill="#6b6f7b"/><path d="M2251.6 288.3 L2267.4 303.7" stroke="#c3c4c9" stroke-width="3"/><path d="M2253 283.6 Q2244 292 2242.6 305.6 L2239.6 309 Q2238.4 310.6 2239.8 312.2 L2243.2 315.6 Q2244.8 317 2246.4 315.8 L2249.2 313.2 Q2262 312 2271.3 302" fill="none" stroke="#2f3440" stroke-width="1.6" stroke-linecap="round" stroke-linejoin="round"/><path d="M2240.2 314 L2236 318.2 Q2235 319.8 2236.4 320.6 Q2237.6 321.4 2239 320 L2242.6 316.3 Z" fill="#6e727d"/><path d="M2244 305.5 L2250 311.5" stroke="#c3c4c9" stroke-width="2"/><path d="M2309.3 298.1 L2326.6 298.1 L2317.95 306.7 Z" fill="#6b6f7b"/><path d="M2387.6 285 H2376 Q2372.2 285 2372.2 288.8 V315.3 Q2372.2 319 2376 319 H2394 Q2397.8 319 2397.8 315.3 V294.6 Z" fill="none" stroke="#fff" stroke-width="2.4" stroke-linejoin="round"/><path d="M2388.6 286.5 V294 H2396.4 Z" fill="#c8c4f5"/><circle cx="2380" cy="293" r="2.3" fill="none" stroke="#c8c4f5" stroke-width="1.5"/><circle cx="2380" cy="300.9" r="2.3" fill="none" stroke="#c8c4f5" stroke-width="1.5"/><rect x="2378.3" y="307.2" width="13.8" height="5.4" rx="1" fill="none" stroke="#c8c4f5" stroke-width="1.5"/><path d="M2441.2 298 L2458.9 298 L2450.05 307 Z" fill="#dcd9fa"/><rect x="2498.1" y="287.1" width="37.7" height="29.6" rx="3" fill="none" stroke="#262b38" stroke-width="2.2"/><circle cx="2507.5" cy="295.9" r="3.4" fill="#3a3f4b"/><path d="M2516 310 L2525.8 301.1 L2532.7 306.2 V313.9 H2519.2 Z" fill="#9d9ea5"/><path d="M2502.9 313.9 L2511 306.2 L2519.2 313.9 Z" fill="#3a3f4b"/><path d="M2573.1 298 L2590.6 298 L2581.85 306.9 Z" fill="#6b6f7b"/><path d="M2656 306.5 H2669.8 V316 Q2669.8 319.7 2666 319.7 H2656 Z" fill="#e6e7eb"/><path d="M2655.8 318.6 H2639 Q2635.1 318.6 2635.1 314.7 V291 Q2635.1 287.1 2639 287.1 H2664.8 Q2668.7 287.1 2668.7 291 V305.6 Z" fill="#fff" stroke="#262b38" stroke-width="2.2" stroke-linejoin="round"/><path d="M2656 318.2 V310.4 Q2656 306.8 2659.6 306.8 H2668.2 Z" fill="#8b8e98" stroke="#262b38" stroke-width="2" stroke-linejoin="round"/><path d="M2642.2 297 H2661.6 M2642.2 302.9 H2661.6 M2642.2 308.9 H2653.5" stroke="#262b38" stroke-width="2" stroke-linecap="round"/><rect x="2729.1" y="284.8" width="34" height="34" fill="none" stroke="#9b9da5" stroke-width="1.6"/><circle cx="2729.1" cy="284.8" r="3.85" fill="#3a3f4b"/><circle cx="2763.1" cy="284.8" r="3.85" fill="#3a3f4b"/><circle cx="2729.1" cy="318.8" r="3.85" fill="#3a3f4b"/><circle cx="2763.1" cy="318.8" r="3.85" fill="#3a3f4b"/><path d="M2737 294.4 H2755 V298.6 H2753.2 V296.6 H2747.8 V307.6 H2750.4 V309.7 H2741.6 V307.6 H2744.2 V296.6 H2738.8 V298.6 H2737 Z" fill="#c4c5ca"/><path d="M2823.2 315.5 L2850.5 288.1" stroke="#9b9da5" stroke-width="1.6"/><circle cx="2819.9" cy="318.8" r="3.4" fill="#3a3f4b"/><circle cx="2853.8" cy="284.8" r="3.4" fill="#3a3f4b"/><path d="M2893.3 298 L2910.4 298 L2901.8500000000004 306.6 Z" fill="#6b6f7b"/><path d="M2951.5 308 H2992.5 V313 Q2992.5 316.2 2989.3 316.2 H2954.7 Q2951.5 316.2 2951.5 313 Z" fill="#cfd0d5"/><path d="M2959.4 293.2 H2955 Q2951.5 293.2 2951.5 296.7 V312.7 Q2951.5 316.2 2955 316.2 H2959.4 M2984.5 293.2 H2989 Q2992.5 293.2 2992.5 296.7 V312.7 Q2992.5 316.2 2989 316.2 H2984.5" fill="none" stroke="#262b38" stroke-width="2"/><path d="M2959.4 293.2 H2984.5" stroke="#262b38" stroke-width="2"/><rect x="2959.4" y="283.2" width="25.1" height="13.1" fill="#fff" stroke="#262b38" stroke-width="2"/><rect x="2959.4" y="313.3" width="25.1" height="7.3" fill="#fff" stroke="#262b38" stroke-width="2"/><circle cx="2986.9" cy="303" r="1.8" fill="#8b8e98"/><path d="M3065 296 H3079 Q3083.8 300 3083.8 304 V317 Q3083.8 320.6 3080 320.6 H3065" fill="none" stroke="#b9bbc1" stroke-width="2" stroke-dasharray="3 3"/><rect x="3057" y="309" width="21" height="6.5" rx="2" fill="#cfd0d5"/><path d="M3050.4 295.2 H3064.6 V320.6 H3047.4 Q3044.4 320.6 3044.4 317.6 V301.2 Z" fill="#fff" stroke="#262b38" stroke-width="2.1" stroke-linejoin="round"/><path d="M3049.5 296.8 L3045.8 300.6 H3049.5 Z" fill="#9d9ea5"/><path d="M3056.2 283.2 H3068.6 L3075.6 290.2 V305.6 Q3075.6 308.5 3072.7 308.5 H3056.2 L3057.6 306 L3055.4 303.5 L3057.6 301 L3055.4 298.5 L3057.6 296 L3055.4 293.5 L3057.6 291 L3055.4 288.5 L3057.6 286 Z" fill="#fff" stroke="#262b38" stroke-width="2.1" stroke-linejoin="round"/><path d="M3068.6 285 L3073.8 290.2 H3068.6 Z" fill="#9d9ea5"/><path d="M3119.6 298 L3136.7 298 L3128.1499999999996 306.9 Z" fill="#6b6f7b"/><circle cx="3193.7" cy="297.6" r="10.9" fill="none" stroke="#262b38" stroke-width="2"/><path d="M3203.6 307.4 L3211.6 315.2" stroke="#6e727d" stroke-width="3.6" stroke-linecap="round"/><path d="M3293.1 285.4 V309.5 M3285.5 302.4 L3293.1 310 L3300.7 302.4" fill="none" stroke="#6e727d" stroke-width="1.9"/><path d="M3276 312.7 V315.4 Q3276 318.4 3279 318.4 H3307 Q3310 318.4 3310 315.4 V312.7" fill="none" stroke="#262b38" stroke-width="2.3" stroke-linecap="round"/><rect x="117.1" y="376" width="45.7" height="25.8" rx="4" fill="none" stroke="#a9abb2" stroke-width="1.9"/><rect x="209.3" y="376" width="45.3" height="25.8" rx="4" fill="none" stroke="#a9abb2" stroke-width="1.9"/><path d="M225.7 371.4 Q231.9 371.4 231.9 377 V401 Q231.9 406.8 225.7 406.8 M238.3 371.4 Q231.9 371.4 231.9 377 V401 Q231.9 406.8 238.3 406.8 M226.2 389.6 H237.8" fill="none" stroke="#2c313d" stroke-width="1.8"/><circle cx="324" cy="388.9" r="14.9" fill="none" stroke="#a9abb2" stroke-width="1.6"/><circle cx="324" cy="388.9" r="6.1" fill="#3b3f4b"/><rect x="401.2" y="374.2" width="29.4" height="29.2" rx="4" fill="none" stroke="#a9abb2" stroke-width="1.9"/><path d="M407.2 387.7 L414 394.3 L425.4 382.4" fill="none" stroke="#2c313d" stroke-width="1.8"/><rect x="485.5" y="376.3" width="44.8" height="25.2" rx="4" fill="none" stroke="#a9abb2" stroke-width="1.9"/><path d="M492 381.2 V396.8" stroke="#2c313d" stroke-width="2"/><path d="M512.8 385 H525.3 L519 392.6 Z" fill="#3b3f4b"/><rect x="577.3" y="370.2" width="45.5" height="39.2" rx="4" fill="none" stroke="#a9abb2" stroke-width="1.9"/><circle cx="587.1" cy="379.9" r="3" fill="#3b3f4b"/><path d="M596.4 379.9 H615.5" stroke="#2c313d" stroke-width="1.9"/><circle cx="587.1" cy="390" r="3" fill="#3b3f4b"/><path d="M596.4 390 H615.5" stroke="#2c313d" stroke-width="1.9"/><circle cx="587.1" cy="400.1" r="3" fill="#3b3f4b"/><path d="M596.4 400.1 H615.5" stroke="#2c313d" stroke-width="1.9"/><rect x="669.3" y="376.1" width="45.4" height="25.5" rx="4" fill="none" stroke="#a9abb2" stroke-width="1.9"/><path d="M673.6 388.3 L693 381 Q695 380.6 695 383 Q695 396 690 405 Q688 409.6 685.5 408.6 Q683 407 683.5 402 Q684.6 397 689 394 L694.8 390.4 L700.7 386.7 L703.4 393.9 L708.4 383.9" fill="none" stroke="#2c313d" stroke-width="1.8" stroke-linejoin="round" stroke-linecap="round"/><rect x="764.6" y="373" width="38.9" height="33.6" rx="5" fill="none" stroke="#a9abb2" stroke-width="1.9"/><path d="M764.6 382 H803.5 M773.3 367.5 V377.7 M794.4 367.5 V377.7" stroke="#a9abb2" stroke-width="1.9"/><circle cx="784" cy="389.9" r="2.8" fill="#3b3f4b"/><circle cx="794.4" cy="389.9" r="2.8" fill="#3b3f4b"/><circle cx="773.3" cy="399.4" r="2.8" fill="#3b3f4b"/><circle cx="784" cy="399.4" r="2.8" fill="#3b3f4b"/><circle cx="794.4" cy="399.4" r="2.8" fill="#3b3f4b"/><text x="139.1" y="395.2" text-anchor="middle" font-family="Liberation Sans" font-weight="700" font-size="16" fill="#2c313d" textLength="22.9" lengthAdjust="spacingAndGlyphs">OK</text></svg>
<svg style="left:0;top:0;z-index:12;pointer-events:none" width="3454" height="1890" viewBox="0 0 3454 1890"><path d="M1816.2 707 L1834.2 725.6 L1817.6 739 Q1816.2 740 1814.8 739 L1800.6 725.4 Q1799.2 723.8 1800.6 722.4 Z" fill="none" stroke="#000" stroke-width="2" stroke-linejoin="round"/><path d="M1805 726.5 H1829.8 L1816.2 738.4 Z" fill="#9a9a9a"/><path d="M1802 713.7 L1818.6 721.2" stroke="#000" stroke-width="1.8"/><circle cx="1818.6" cy="721.2" r="2.2" fill="#000"/><path d="M1834.2 725.6 L1830.4 726.6" stroke="#000" stroke-width="2"/><path d="M1836 737 Q1839.2 741.8 1839.2 743.4 Q1839.2 746 1836 746 Q1832.8 746 1832.8 743.4 Q1832.8 741.8 1836 737 Z" fill="#6a6a6a"/><g transform="translate(1815,822) rotate(45)"><rect x="-4" y="-2" width="8" height="19" rx="4" fill="#fff" stroke="#000" stroke-width="2"/><rect x="-9" y="-8" width="18" height="6" fill="#fff" stroke="#000" stroke-width="2"/><path d="M-9 -8 V-20 L-6 -24 L-3 -20 L1 -23 L4 -19 L8 -22 L9 -8 Z" fill="#fff" stroke="#000" stroke-width="2" stroke-linejoin="round"/><path d="M-6 -20 L-3 -12 M4 -19 L6 -10" stroke="#9a9a9a" stroke-width="3"/></g><path d="M1836 829 Q1839.2 833.8 1839.2 835.4 Q1839.2 838 1836 838 Q1832.8 838 1832.8 835.4 Q1832.8 833.8 1836 829 Z" fill="#6a6a6a"/><g stroke="#000" stroke-width="1.8"><path d="M1804.3 898.9 H1835.6"/><path d="M1804.3 906.7 H1816 M1820 906.7 H1832 M1835.6 906.7 H1836"/><path d="M1804.3 914.9 H1808 M1812 914.9 H1816 M1820 914.9 H1824 M1828 914.9 H1832"/><path d="M1804.3 922.9 H1836" stroke-dasharray="1.6 2.4"/></g><circle cx="1804.3" cy="898.9" r="1.6" fill="#000"/><circle cx="1835.6" cy="898.9" r="1.6" fill="#000"/><circle cx="1804.3" cy="906.7" r="1.6" fill="#000"/><circle cx="1835.6" cy="906.7" r="1.6" fill="#000"/><circle cx="1804.3" cy="914.9" r="1.6" fill="#000"/><circle cx="1835.6" cy="914.9" r="1.6" fill="#000"/><circle cx="1804.3" cy="922.9" r="1.6" fill="#000"/><circle cx="1835.6" cy="922.9" r="1.6" fill="#000"/><rect x="1802.1" y="992" width="35.9" height="2" fill="#000"/><rect x="1802.1" y="999.8" width="35.9" height="4" fill="#000"/><rect x="1802.1" y="1009.7" width="35.9" height="6" fill="#000"/><rect x="1812" y="1088.2" width="27.7" height="27.3" rx="2" fill="#bdbdbd"/><rect x="1800.6" y="1076.6" width="26.7" height="26.7" rx="2" fill="#555" fill-opacity="0.82" stroke="#4a4a4a" stroke-width="1"/><rect x="1809.4" y="1181.4" width="21.2" height="12.7" rx="2" fill="none" stroke="#000" stroke-width="2"/><path d="M1830 1172 Q1837.6 1172.6 1838.4 1181.4 M1834.4 1178.6 L1838.4 1182.6 L1842 1178.2" fill="none" stroke="#000" stroke-width="1.9" stroke-linecap="round" stroke-linejoin="round"/><path d="M1810.4 1204 Q1802 1203.2 1801.4 1194.6 M1797.8 1198.4 L1801.4 1194.2 L1805.4 1198" fill="none" stroke="#000" stroke-width="1.9" stroke-linecap="round" stroke-linejoin="round"/><path d="M1799.2 1295 V1276 Q1799.2 1272.7 1802.5 1272.7 H1806.3 M1833.7 1272.7 H1837.5 Q1840.8 1272.7 1840.8 1276 V1295" fill="none" stroke="#000" stroke-width="2"/><rect x="1807.3" y="1262.5" width="25.4" height="13.2" fill="#fff" stroke="#000" stroke-width="2"/><circle cx="1834.8" cy="1281.9" r="1.8" fill="#8b8b8b"/><clipPath id="cp727"><circle cx="2383.8" cy="727.9" r="16.3"/></clipPath><g clip-path="url(#cp727)"><rect x="2366" y="709.9" width="36" height="36" fill="#fff"/><rect x="2367.9" y="711.6" width="8.1" height="8.1" fill="#cfcfcf"/><rect x="2384.1" y="711.6" width="8.1" height="8.1" fill="#cfcfcf"/><rect x="2376.0" y="719.7" width="8.1" height="8.1" fill="#cfcfcf"/><rect x="2392.2000000000003" y="719.7" width="8.1" height="8.1" fill="#cfcfcf"/><rect x="2367.9" y="727.8000000000001" width="8.1" height="8.1" fill="#cfcfcf"/><rect x="2384.1" y="727.8000000000001" width="8.1" height="8.1" fill="#cfcfcf"/><rect x="2376.0" y="735.9" width="8.1" height="8.1" fill="#cfcfcf"/><rect x="2392.2000000000003" y="735.9" width="8.1" height="8.1" fill="#cfcfcf"/></g><circle cx="2383.8" cy="727.9" r="16.3" fill="none" stroke="#4a4f5c" stroke-width="1.6"/><path d="M2375.4 736.5 L2392.5 719.3" stroke="#e8312a" stroke-width="2.7" stroke-linecap="round"/><clipPath id="cp819"><circle cx="2383.8" cy="819.6" r="16.3"/></clipPath><g clip-path="url(#cp819)"><rect x="2366" y="801.6" width="36" height="36" fill="#fff"/><rect x="2367.9" y="803.3000000000001" width="8.1" height="8.1" fill="#cfcfcf"/><rect x="2384.1" y="803.3000000000001" width="8.1" height="8.1" fill="#cfcfcf"/><rect x="2376.0" y="811.4000000000001" width="8.1" height="8.1" fill="#cfcfcf"/><rect x="2392.2000000000003" y="811.4000000000001" width="8.1" height="8.1" fill="#cfcfcf"/><rect x="2367.9" y="819.5000000000001" width="8.1" height="8.1" fill="#cfcfcf"/><rect x="2384.1" y="819.5000000000001" width="8.1" height="8.1" fill="#cfcfcf"/><rect x="2376.0" y="827.6" width="8.1" height="8.1" fill="#cfcfcf"/><rect x="2392.2000000000003" y="827.6" width="8.1" height="8.1" fill="#cfcfcf"/></g><circle cx="2383.8" cy="819.6" r="16.3" fill="none" stroke="#4a4f5c" stroke-width="1.6"/><path d="M2375.4 828.2 L2392.5 811.0" stroke="#e8312a" stroke-width="2.7" stroke-linecap="round"/><path d="M2429.3 1282 L2435 1287.2 L2444.2 1274.5" fill="none" stroke="#0b0c10" stroke-width="3.3" stroke-linecap="round" stroke-linejoin="round"/></svg>
</body></html>
